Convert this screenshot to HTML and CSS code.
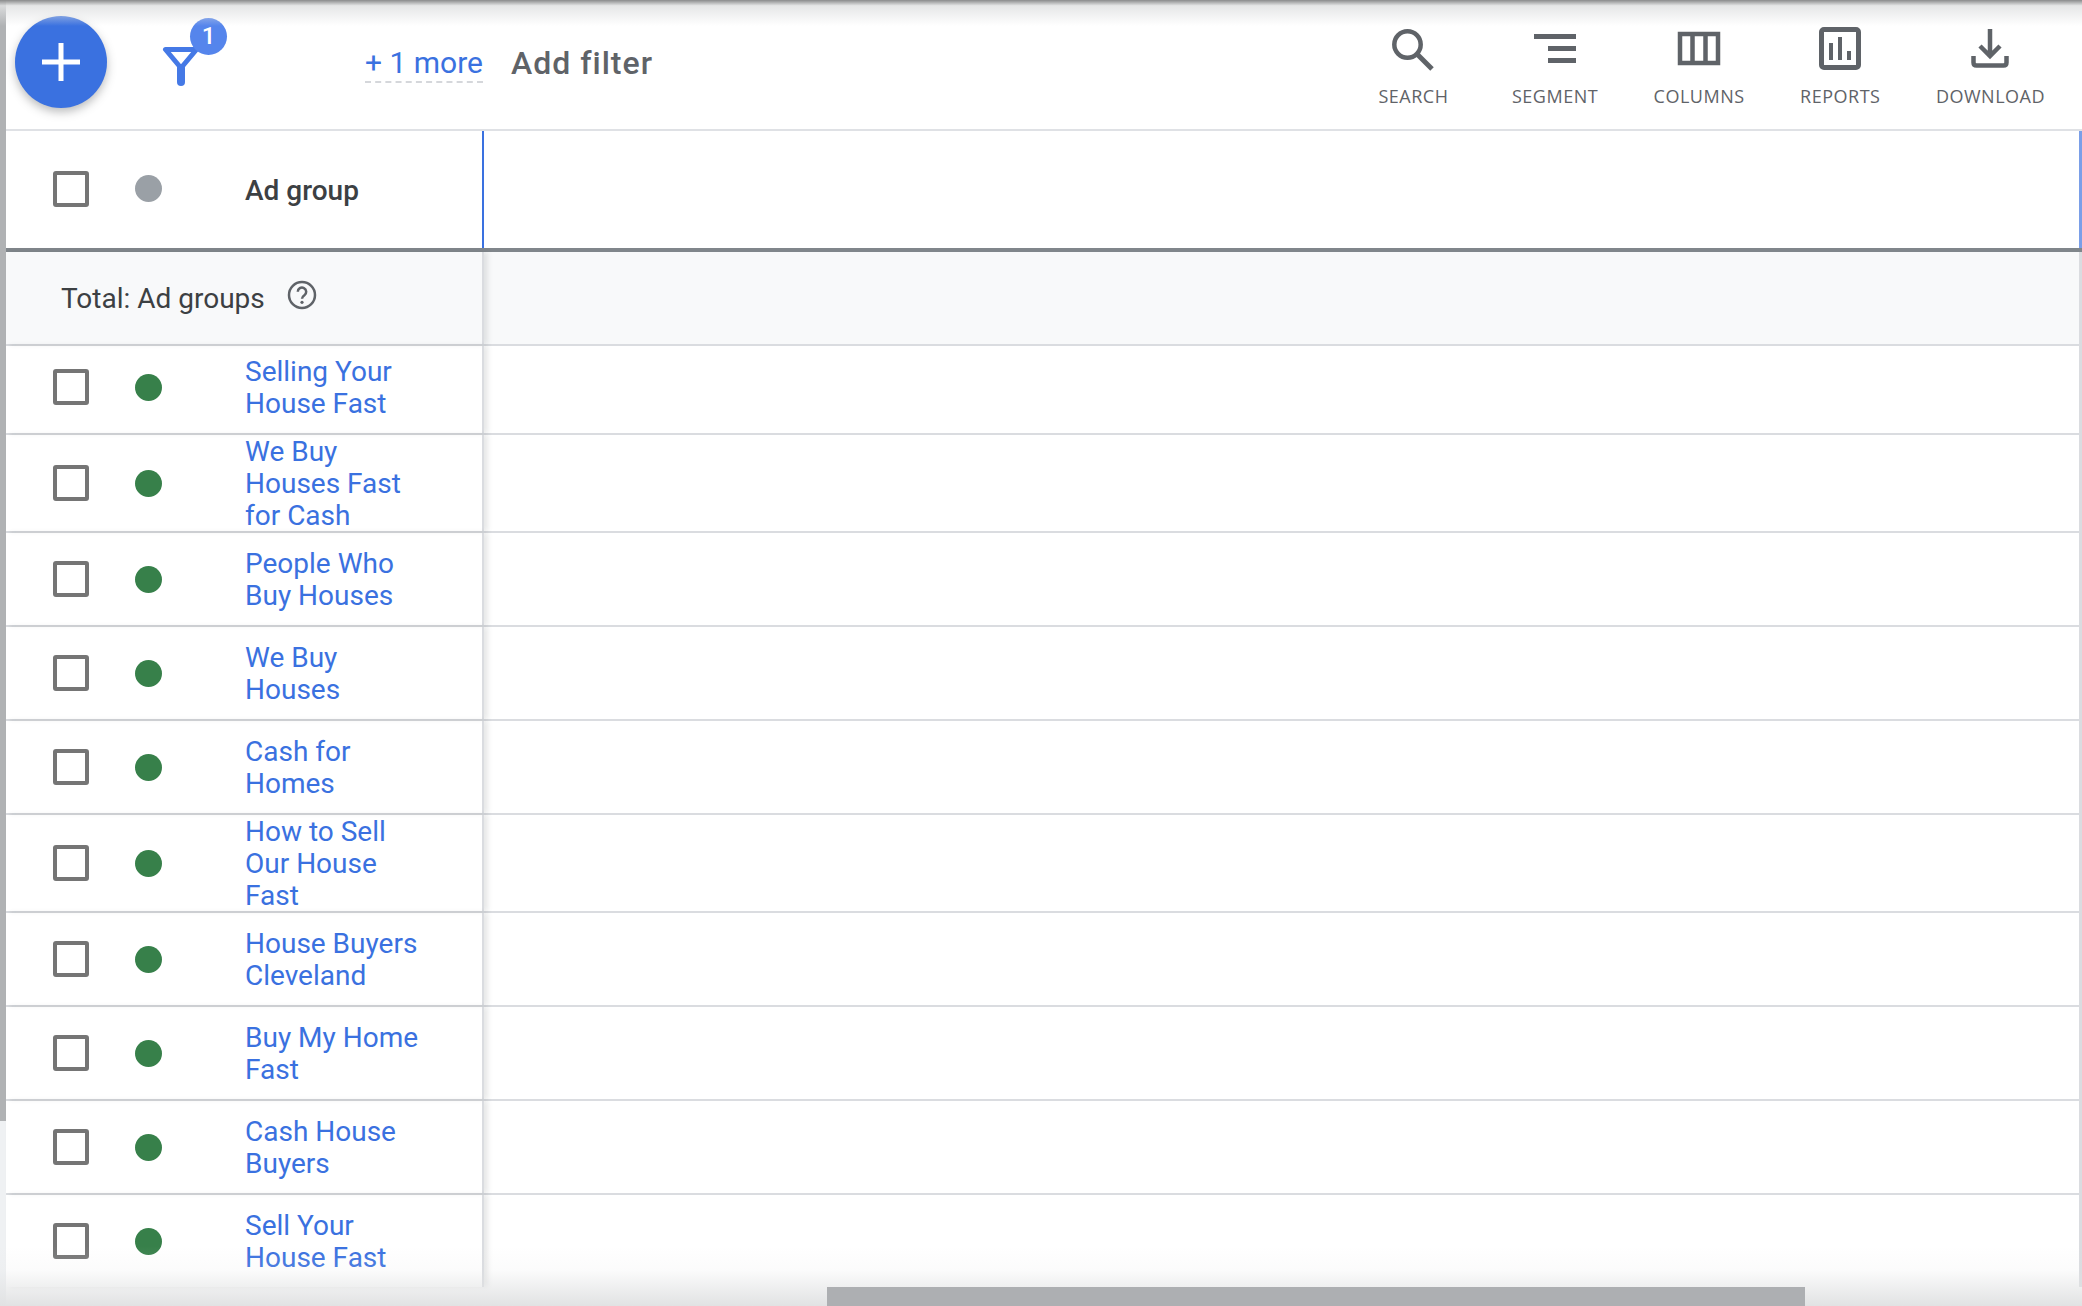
FILE: index.html
```html
<!DOCTYPE html>
<html lang="en">
<head>
<meta charset="utf-8">
<title>Ad groups</title>
<link rel="stylesheet" href="styles.css">
</head>
<body>
<div class="page">
  <div class="rail"><div class="rail-thumb"></div></div>
  <main class="main">
    <header class="toolbar">
      <button class="fab" aria-label="Add">
        <svg width="40" height="40" viewBox="0 0 40 40"><path d="M20 1v38M1 20h38" fill="none" stroke="#fff" stroke-width="5"/></svg>
      </button>
      <div class="filter-icon">
        <svg width="38" height="40" viewBox="0 0 38 40"><path d="M3.5 3.500h31L19 22z" fill="none" stroke="#4579e6" stroke-width="5" stroke-linejoin="round"/><path d="M19 22v14" stroke="#4579e6" stroke-width="8" stroke-linecap="round"/></svg>
        <span class="badge">1</span>
      </div>
      <a class="more">+ 1 more</a>
      <span class="add-filter">Add filter</span>
      <nav class="tools">
        <div class="tool tool-search">
          <svg class="tool-icon" viewBox="0 0 48 48"><circle cx="18.5" cy="20.5" r="13.2" fill="none" stroke="#5f6368" stroke-width="4.5"/><path d="M28 30l15 15" stroke="#5f6368" stroke-width="5"/></svg>
          <span>SEARCH</span>
        </div>
        <div class="tool">
          <svg class="tool-icon" viewBox="0 0 48 48"><path d="M3 12.5h42M17 24.5h28M17 36.5h28" stroke="#5f6368" stroke-width="5"/></svg>
          <span>SEGMENT</span>
        </div>
        <div class="tool">
          <svg class="tool-icon" viewBox="0 0 48 48"><path d="M5 10h38v29H5zM17.500 10v29M30.500 10v29" fill="none" stroke="#5f6368" stroke-width="4.500"/></svg>
          <span>COLUMNS</span>
        </div>
        <div class="tool">
          <svg class="tool-icon" viewBox="0 0 48 48"><rect x="5.500" y="5.500" width="37" height="38" rx="2.500" fill="none" stroke="#5f6368" stroke-width="5"/><path d="M15 19v17M24 13v23M33 27v9" stroke="#5f6368" stroke-width="4"/></svg>
          <span>REPORTS</span>
        </div>
        <div class="tool">
          <svg class="tool-icon" viewBox="0 0 48 48"><path d="M24 5v26M14 22l10 10 10-10" fill="none" stroke="#5f6368" stroke-width="4.500"/><path d="M7.500 32v6.500q0 3 3 3h27q3 0 3-3V32" fill="none" stroke="#5f6368" stroke-width="4.500"/></svg>
          <span>DOWNLOAD</span>
        </div>
      </nav>
    </header>

    <section class="table">
      <div class="row row-head">
        <div class="frozen">
          <span class="check"></span><span class="dot dot-gray"></span><span class="name name-head">Ad group</span>
        </div>
        <div class="rest"></div>
      </div>
      <div class="row row-total">
        <div class="frozen">
          <span class="total-label">Total: Ad groups</span>
          <svg class="help" viewBox="0 0 30 30"><circle cx="15" cy="15" r="13" fill="none" stroke="#5f6368" stroke-width="2.500"/><path d="M10.800 11.800a4.200 4.200 0 1 1 6.600 3.400c-1.500 1-2.400 1.800-2.400 3.600" fill="none" stroke="#5f6368" stroke-width="2.500"/><circle cx="15" cy="22.300" r="1.600" fill="#5f6368"/></svg>
        </div>
        <div class="rest"></div>
      </div>
      <div class="row row-short">
        <div class="frozen"><span class="check"></span><span class="dot"></span><a class="name">Selling Your<br>House Fast</a></div>
        <div class="rest"></div>
      </div>
      <div class="row row-tall">
        <div class="frozen"><span class="check"></span><span class="dot"></span><a class="name">We Buy<br>Houses Fast<br>for Cash</a></div>
        <div class="rest"></div>
      </div>
      <div class="row">
        <div class="frozen"><span class="check"></span><span class="dot"></span><a class="name">People Who<br>Buy Houses</a></div>
        <div class="rest"></div>
      </div>
      <div class="row">
        <div class="frozen"><span class="check"></span><span class="dot"></span><a class="name">We Buy<br>Houses</a></div>
        <div class="rest"></div>
      </div>
      <div class="row">
        <div class="frozen"><span class="check"></span><span class="dot"></span><a class="name">Cash for<br>Homes</a></div>
        <div class="rest"></div>
      </div>
      <div class="row row-tall">
        <div class="frozen"><span class="check"></span><span class="dot"></span><a class="name">How to Sell<br>Our House<br>Fast</a></div>
        <div class="rest"></div>
      </div>
      <div class="row">
        <div class="frozen"><span class="check"></span><span class="dot"></span><a class="name">House Buyers<br>Cleveland</a></div>
        <div class="rest"></div>
      </div>
      <div class="row">
        <div class="frozen"><span class="check"></span><span class="dot"></span><a class="name">Buy My Home<br>Fast</a></div>
        <div class="rest"></div>
      </div>
      <div class="row">
        <div class="frozen"><span class="check"></span><span class="dot"></span><a class="name">Cash House<br>Buyers</a></div>
        <div class="rest"></div>
      </div>
      <div class="row row-last">
        <div class="frozen"><span class="check"></span><span class="dot"></span><a class="name">Sell Your<br>House Fast</a></div>
        <div class="rest"></div>
      </div>
    </section>

    <div class="hscroll"><div class="hscroll-thumb"></div></div>
  </main>
</div>
<div class="shade-top"></div>
<div class="shade-bottom"></div>
</body>
</html>
```

FILE: styles.css
```css
* { box-sizing: border-box; }

html, body {
  margin: 0;
  height: 100%;
  overflow: hidden;
  background: #fff;
}

body {
  font-family: Roboto, "Liberation Sans", sans-serif;
  color: #3c4043;
}

.page {
  display: flex;
  width: 2082px;
  height: 1306px;
}

.rail {
  flex: 0 0 6px;
  background: #eff1f3;
}

.rail-thumb {
  height: 1121px;
  background: #b0b2b4;
}

.main {
  flex: 1;
  display: flex;
  flex-direction: column;
  min-width: 0;
}

/* Toolbar */
.toolbar {
  flex: 0 0 131px;
  display: flex;
  align-items: flex-start;
  border-bottom: 2px solid #dfe1e5;
  padding-left: 9px;
}

.fab {
  flex: 0 0 92px;
  height: 92px;
  margin-top: 16px;
  padding: 0;
  border: 0;
  border-radius: 50%;
  background: #3a71e0;
  display: flex;
  align-items: center;
  justify-content: center;
  box-shadow: 0 4px 10px rgba(60, 64, 67, .35);
}

.filter-icon {
  position: relative;
  width: 38px;
  height: 40px;
  margin: 46px 0 0 55px;
}

.badge {
  position: absolute;
  left: 28px;
  top: -28px;
  width: 37px;
  height: 37px;
  border-radius: 50%;
  background: #5585ec;
  color: #fff;
  font-size: 24px;
  font-weight: 500;
  line-height: 37px;
  text-align: center;
}

.more {
  margin: 44px 0 0 165px;
  height: 39px;
  font-size: 30px;
  line-height: 38px;
  color: #3a71e0;
  border-bottom: 2px dashed #d5d7db;
}

.add-filter {
  margin: 44px 0 0 28px;
  font-size: 32px;
  line-height: 38px;
  font-weight: 500;
  letter-spacing: 1px;
  color: #5f6368;
}

.tools {
  margin-left: auto;
  padding: 24px 37px 0 0;
  display: flex;
  gap: 55.5px;
}

.tool {
  display: flex;
  flex-direction: column;
  align-items: center;
  font-family: "Open Sans", Roboto, sans-serif;
  font-size: 18px;
  letter-spacing: .5px;
  line-height: 22px;
  color: #5f6368;
}

.tool-search { margin-right: 8px; }

.tool-icon {
  width: 48px;
  height: 48px;
  margin-bottom: 13px;
}

/* Table */
.table {
  flex: 1;
  display: flex;
  flex-direction: column;
}

.row {
  flex: 0 0 94px;
  display: flex;
  border-bottom: 2px solid #dadce0;
}

.row-short { flex-basis: 89px; }
.row-short .frozen { padding-bottom: 5px; }
.row-tall { flex-basis: 98px; }
.row-last { flex: 1; border-bottom: 0; }

.frozen {
  flex: 0 0 478px;
  display: flex;
  align-items: center;
  padding-left: 47px;
  border-right: 2px solid #dadce0;
  box-shadow: 4px 0 5px rgba(60, 64, 67, .12);
  position: relative;
}

.rest {
  flex: 1;
  border-right: 3px solid #dadce0;
}

.row-head {
  flex-basis: 121px;
  border-bottom: 4px solid #80868b;
}

.row-head .frozen {
  padding-bottom: 2px;
  border-right-color: #3a71e0;
  box-shadow: none;
}

.row-head .rest { border-right-color: #7a9fe8; }

.row-total {
  background: #f8f9fa;
}

.row-total .frozen { padding-left: 55px; }

.check {
  flex: 0 0 36px;
  height: 36px;
  border: 4px solid #757575;
  border-radius: 3px;
}

.dot {
  flex: 0 0 27px;
  height: 27px;
  margin-left: 46px;
  border-radius: 50%;
  background: #37804a;
}

.dot-gray { background: #9aa0a6; }

.name {
  margin: 1px 0 -1px 83px;
  font-size: 28px;
  line-height: 32px;
  color: #3a71e0;
}

.name-head {
  margin-top: 2px;
  margin-bottom: -2px;
  color: #3c4043;
  font-weight: 500;
}

.total-label {
  margin: 1px 0 -1px;
  font-size: 28px;
  line-height: 32px;
}

.help {
  width: 30px;
  height: 30px;
  margin: -6px 0 0 22px;
}

/* Horizontal scrollbar */
.hscroll {
  flex: 0 0 19px;
  padding-left: 821px;
}

.hscroll-thumb {
  position: relative;
  z-index: 2;
  width: 978px;
  height: 100%;
  background: #adafb2;
}

.shade-top {
  position: absolute;
  z-index: 1;
  left: 0;
  top: 0;
  width: 100%;
  height: 26px;
  background: linear-gradient(#8a8b8c, rgba(225, 226, 227, .85) 22%, rgba(255, 255, 255, 0));
  pointer-events: none;
}

.shade-bottom {
  position: absolute;
  z-index: 1;
  left: 0;
  bottom: 0;
  width: 100%;
  height: 60px;
  background: linear-gradient(rgba(225, 226, 227, 0), rgba(225, 226, 227, .12) 40%, rgba(225, 226, 227, 1));
  pointer-events: none;
}
```
